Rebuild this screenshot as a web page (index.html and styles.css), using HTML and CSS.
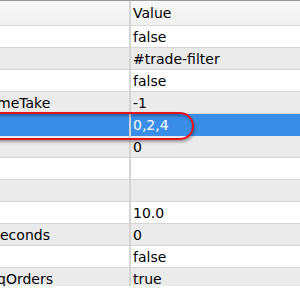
FILE: index.html
```html
<!DOCTYPE html>
<html lang="en">
<head>
  <meta charset="UTF-8">
  <title>Properties</title>
  <link rel="stylesheet" href="styles.css">
</head>
<body>
  <div class="panel">
    <table class="props">
      <thead>
        <tr>
          <th class="name"></th>
          <th class="value">Value</th>
        </tr>
      </thead>
      <tbody>
        <tr><td class="name"></td><td class="value">false</td></tr>
        <tr><td class="name"></td><td class="value">#trade-filter</td></tr>
        <tr><td class="name"></td><td class="value">false</td></tr>
        <tr><td class="name cut">meTake</td><td class="value">-1</td></tr>
        <tr class="selected"><td class="name"></td><td class="value">0,2,4</td></tr>
        <tr><td class="name"></td><td class="value">0</td></tr>
        <tr><td class="name"></td><td class="value"></td></tr>
        <tr><td class="name"></td><td class="value"></td></tr>
        <tr><td class="name"></td><td class="value">10.0</td></tr>
        <tr><td class="name">econds</td><td class="value">0</td></tr>
        <tr><td class="name"></td><td class="value">false</td></tr>
        <tr><td class="name cut">qOrders</td><td class="value">true</td></tr>
      </tbody>
    </table>

    <!-- annotation round the selected row -->
    <div class="highlight"></div>
  </div>
</body>
</html>
```

FILE: styles.css
```css
body {
  margin: 0;
  background-color: white;
  font-family: "DejaVu Sans", Verdana, sans-serif;
  font-size: 14px;
  color: #000;
}

.panel {
  position: relative;
  width: 300px;
  height: 285px;
  overflow: hidden;
  border-top: 1px solid #9a9a9a;
  box-shadow: 0 2px 3px rgba(0,0,0,0.6);
}

.props {
  width: 100%;
  border-collapse: collapse;
  table-layout: fixed;
}

.props th,
.props td {
  height: 21px;
  padding: 0 0 0 2px;
  text-align: left;
  font-weight: normal;
  white-space: nowrap;
  overflow: hidden;
  border-bottom: 1px solid #d6d6d6;
}

.props th {
  height: 24px;
  background: linear-gradient(#f8f8f8, #f0f0f0);
  border-bottom: 1px solid #dcdcdc;
}

.props .name {
  width: 129px;
  padding-left: 0;
  border-right: 2px solid #d4d4d4;
}

.props .cut {
  text-indent: -3px;
}

.props tbody tr:nth-child(odd) {
  background-color: white;
}

.props tbody tr:nth-child(even) {
  background-color: #ebebeb;
}

.props tbody tr.selected {
  background-color: #3a8ee8;
  color: white;
}

.props tr.selected td {
  border-bottom-color: #3a8ee8;
}

.highlight {
  position: absolute;
  left: -30px;
  top: 111px;
  width: 220px;
  height: 24px;
  border: 2px solid #e3141c;
  border-radius: 14px;
  box-shadow: 1px 2px 3px rgba(0,0,0,0.35), inset 1px 2px 3px rgba(0,0,0,0.3);
}
```
